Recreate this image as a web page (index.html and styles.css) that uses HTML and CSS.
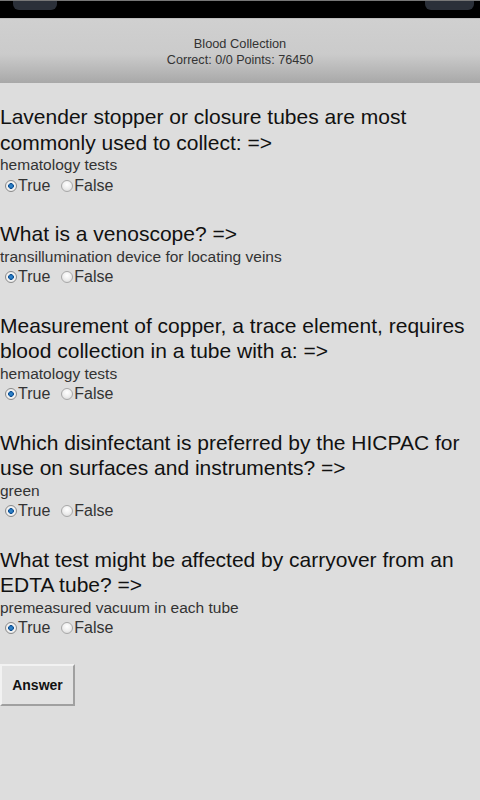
FILE: index.html
```
<!DOCTYPE html>
<html>
<head>
<meta charset="utf-8">
<link rel="stylesheet" href="styles.css">
</head>
<body>
<div class="statusbar">
  <div class="tab tab-left"></div>
  <div class="tab tab-right"></div>
</div>
<header class="header">
  <div class="title">Blood Collection</div>
  <div class="score">Correct: 0/0 Points: 76450</div>
</header>
<main class="content">
  <section class="q">
    <div class="qtext">Lavender stopper or closure tubes are most commonly used to collect: =&gt;</div>
    <div class="ans">hematology tests</div>
    <div class="choices"><label class="opt"><input type="radio" name="q1" checked>True</label><label class="opt"><input type="radio" name="q1">False</label></div>
  </section>
  <section class="q">
    <div class="qtext">What is a venoscope? =&gt;</div>
    <div class="ans">transillumination device for locating veins</div>
    <div class="choices"><label class="opt"><input type="radio" name="q2" checked>True</label><label class="opt"><input type="radio" name="q2">False</label></div>
  </section>
  <section class="q">
    <div class="qtext">Measurement of copper, a trace element, requires blood collection in a tube with a: =&gt;</div>
    <div class="ans">hematology tests</div>
    <div class="choices"><label class="opt"><input type="radio" name="q3" checked>True</label><label class="opt"><input type="radio" name="q3">False</label></div>
  </section>
  <section class="q">
    <div class="qtext">Which disinfectant is preferred by the HICPAC for use on surfaces and instruments? =&gt;</div>
    <div class="ans">green</div>
    <div class="choices"><label class="opt"><input type="radio" name="q4" checked>True</label><label class="opt"><input type="radio" name="q4">False</label></div>
  </section>
  <section class="q">
    <div class="qtext">What test might be affected by carryover from an EDTA tube? =&gt;</div>
    <div class="ans">premeasured vacuum in each tube</div>
    <div class="choices"><label class="opt"><input type="radio" name="q5" checked>True</label><label class="opt"><input type="radio" name="q5">False</label></div>
  </section>
  <button class="answer-btn">Answer</button>
</main>
</body>
</html>
```
FILE: styles.css
```
html, body {
  margin: 0;
  padding: 0;
}
body {
  width: 480px;
  min-height: 800px;
  background: #dddddd;
  font-family: "Liberation Sans", Arial, sans-serif;
  color: #111;
}
.statusbar {
  height: 18px;
  background: #000;
  border-top: 1px solid #777;
  display: flex;
  justify-content: space-between;
  padding: 0 6px 0 10px;
  box-sizing: border-box;
}
.tab {
  width: 47px;
  height: 9px;
  background: #2b3039;
  border-radius: 0 0 6px 6px;
}
.tab-left { margin-left: 3px; width: 44px; }
.tab-right { width: 49px; }
.header {
  height: 65px;
  background: linear-gradient(to bottom, #d0d0d0 0%, #cbcbcb 55%, #b8b8b8 80%, #a8a8a8 100%);
  border-top: 1px solid #bdbdbd;
  box-sizing: border-box;
  display: flex;
  flex-direction: column;
  align-items: center;
  justify-content: center;
  padding-top: 2px;
  color: #333;
  font-size: 12.6px;
  line-height: 16px;
}
.title { font-size: 12.8px; }
.content {
  padding: 21px 0 0 0;
}
.q {
  margin-bottom: 26px;
}
.qtext {
  font-size: 21px;
  line-height: 25.5px;
  color: #111;
}
.ans {
  font-size: 15.5px;
  line-height: 20px;
  color: #333;
}
.choices {
  display: flex;
  height: 20px;
  box-sizing: border-box;
  align-items: center;
  font-size: 16px;
  color: #333;
  padding-top: 1px;
}
.opt {
  display: flex;
  align-items: center;
  margin-right: 6px;
}
.opt input {
  appearance: none;
  -webkit-appearance: none;
  width: 12px;
  height: 12px;
  margin: 0 1px 0 5px;
  border-radius: 50%;
  border: 1px solid #a8a8a8;
  background: radial-gradient(circle at 50% 35%, #ffffff 0%, #eeeeee 50%, #d4d4d4 100%);
  box-sizing: border-box;
}
.opt input:checked {
  border-color: #8a8a8a;
  background: radial-gradient(circle, #3a8fd0 0%, #1a66b0 30%, #0f4f8f 36%, #f4f4f4 44%, #e4e4e4 100%);
}
.answer-btn {
  display: block;
  margin-top: 0;
  width: 75px;
  height: 42px;
  font-family: "Liberation Sans", Arial, sans-serif;
  font-size: 14px;
  font-weight: bold;
  color: #111;
  background: #e2e2e2;
  border: 2px solid;
  border-color: #f2f2f2 #a0a0a0 #a0a0a0 #f2f2f2;
  padding: 0;
}
```
